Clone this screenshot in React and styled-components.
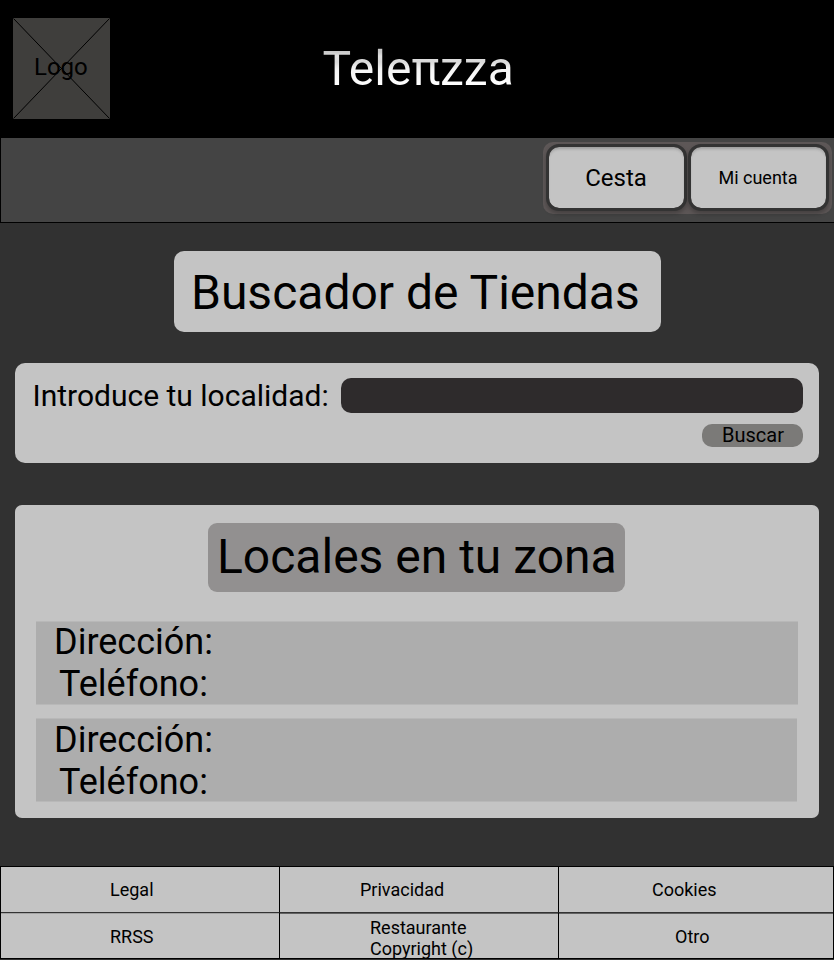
import React from "react";
import styled, { createGlobalStyle } from "styled-components";

const GlobalStyle = createGlobalStyle`
  *, *::before, *::after { box-sizing: border-box; }
  html { background: #313131; }
  body { margin: 0; font-family: Roboto, sans-serif; color: #000; }
  h1, h2, p { margin: 0; font-weight: 400; }
  button, input { font: inherit; color: inherit; border: 0; padding: 0; margin: 0; }
`;

const Page = styled.div`
  width: 834px;
  height: 960px;
  display: flex;
  flex-direction: column;
  background: #313131;
  overflow: hidden;
`;

const Header = styled.header`
  flex: none;
  height: 138px;
  display: grid;
  grid-template-columns: 322px auto;
  background: #000;
  padding-top: 18px;
`;

const LogoBox = styled.div`
  display: grid;
  width: 97px;
  height: 101px;
  margin-left: 13px;
  background: #3f3e3c;
  > * { grid-area: 1 / 1; }
`;

const LogoText = styled.span`
  padding: 35px 0 0 21px;
  font-size: 24px;
  line-height: 28px;
`;

const Brand = styled.h1`
  justify-self: start;
  height: 56px;
  margin: 23px 0 0 0.5px;
  font-size: 48px;
  line-height: 56px;
  color: transparent;
  background: linear-gradient(#c8c8c8 11px, #e0e0e0 15px, #dadada 21px, #f4f4f4 28px, #fff 44px);
  background-clip: text;
  -webkit-background-clip: text;
`;

const Nav = styled.nav`
  flex: none;
  height: 85px;
  display: flex;
  justify-content: flex-end;
  align-items: flex-start;
  padding: 4px 2px 0 0;
  background: #444;
  border-left: 1px solid #000;
  border-bottom: 1px solid #000;
`;

const NavActions = styled.div`
  width: 289px;
  height: 72px;
  display: flex;
  gap: 1px;
  padding: 2px 3px;
  border-radius: 10px;
  background: #5d5757;
`;

const NavButton = styled.button`
  width: 141px;
  height: 67px;
  border: 3px solid #333;
  border-radius: 13px;
  background: #c4c4c4;
  background-clip: padding-box;
  box-shadow: 0 3px 4px rgba(0, 0, 0, 0.25), inset 0 3px 3px -1px rgba(0, 0, 0, 0.2);
  font-size: ${(p) => p.$size}px;
  line-height: 30px;
  padding: 1px 1px 0 0;
`;

const Main = styled.main`
  flex: none;
  height: 643px;
  padding: 28px 15px 0;
  display: flex;
  flex-direction: column;
`;

const PageTitle = styled.h2`
  align-self: flex-start;
  width: 487px;
  height: 81px;
  margin-left: 159px;
  padding: 14px 0 0 17px;
  border-radius: 10px;
  background: #c4c4c4;
  font-size: 48px;
  line-height: 56px;
  white-space: nowrap;
`;

const SearchPanel = styled.form`
  height: 100px;
  margin-top: 31px;
  padding: 15px 16px 0 17.5px;
  border-radius: 10px;
  background: #c4c4c4;
  display: flex;
  flex-direction: column;
  align-items: flex-end;
  gap: 11px;
`;

const SearchRow = styled.div`
  width: 100%;
  display: flex;
  justify-content: space-between;
`;

const SearchLabel = styled.label`
  font-size: 30px;
  line-height: 35px;
  white-space: nowrap;
`;

const SearchInput = styled.input`
  width: 462px;
  height: 35px;
  border-radius: 10px;
  background: #2e2b2c;
`;

const SearchButton = styled.button`
  width: 101px;
  height: 23px;
  padding-left: 1px;
  border-radius: 10px;
  background: #7b7a78;
  font-size: 20px;
  line-height: 23px;
`;

const Results = styled.section`
  height: 313px;
  margin-top: 42px;
  padding: 18px 21px 0;
  border-radius: 7px;
  background: #c4c4c4;
`;

const ResultsTitle = styled.h2`
  width: 417px;
  height: 69px;
  margin-left: 172px;
  padding: 6px 0 0 9px;
  border-radius: 9px;
  background: #929090;
  font-size: 48px;
  line-height: 56px;
  white-space: nowrap;
`;

const StoreList = styled.div`
  margin-top: 29px;
  display: flex;
  flex-direction: column;
  gap: 13px;
`;

const Store = styled.article`
  width: ${(p) => p.$width}px;
  height: 84px;
  padding-top: ${(p) => p.$top}px;
  background: #adadad;
  box-shadow: inset 0 1px 0 #b8b8b8, inset 0 -1px 0 #b8b8b8;
  font-size: 36px;
  line-height: 42px;
`;

const StoreLine = styled.p`
  padding-left: ${(p) => p.$indent}px;
`;

const Footer = styled.footer`
  flex: none;
  height: 93px;
  display: grid;
  grid-template-columns: 279px 279px 1fr;
  grid-template-rows: 45px 46px;
  border: 1px solid #000;
  background: #c4c4c4;
  font-size: 18px;
  line-height: 21px;
`;

const FooterCell = styled.div`
  white-space: nowrap;
  padding: ${(p) => p.$top}px 0 0 ${(p) => p.$left}px;
  border-right: ${(p) => (p.$last ? "0" : "1px solid #000")};
  border-top: ${(p) => (p.$second ? "1px solid #333" : "0")};
  box-shadow: ${(p) => (p.$second ? (p.$first ? "inset 0 1px 0 #a4a4a4" : "inset 0 1px 0 #626262") : "none")};
`;

const stores = [
  { width: 762, top: 0 },
  { width: 761, top: 1 },
];

export default function App() {
  return (
    <>
      <GlobalStyle />
      <Page>
        <Header>
          <LogoBox>
            <svg width="97" height="101" fill="none" stroke="#000">
              <path d="M.5 .5 96.5 100.5M96.5 .5 .5 100.5" />
            </svg>
            <LogoText>Logo</LogoText>
          </LogoBox>
          <Brand>Teleπzza</Brand>
        </Header>
        <Nav>
          <NavActions>
            <NavButton $size={24}>Cesta</NavButton>
            <NavButton $size={18}>Mi cuenta</NavButton>
          </NavActions>
        </Nav>
        <Main>
          <PageTitle>Buscador de Tiendas</PageTitle>
          <SearchPanel>
            <SearchRow>
              <SearchLabel htmlFor="city">Introduce tu localidad:</SearchLabel>
              <SearchInput id="city" />
            </SearchRow>
            <SearchButton type="button">Buscar</SearchButton>
          </SearchPanel>
          <Results>
            <ResultsTitle>Locales en tu zona</ResultsTitle>
            <StoreList>
              {stores.map(({ width, top }) => (
                <Store key={width} $width={width} $top={top}>
                  <StoreLine $indent={18}>Dirección:</StoreLine>
                  <StoreLine $indent={23}>Teléfono:</StoreLine>
                </Store>
              ))}
            </StoreList>
          </Results>
        </Main>
        <Footer>
          <FooterCell $top={12} $left={109}>Legal</FooterCell>
          <FooterCell $top={12} $left={80}>Privacidad</FooterCell>
          <FooterCell $top={12} $left={93} $last>Cookies</FooterCell>
          <FooterCell $top={13} $left={109} $second $first>RRSS</FooterCell>
          <FooterCell $top={4} $left={90} $second>Restaurante<br />Copyright (c)</FooterCell>
          <FooterCell $top={13} $left={116} $second $last>Otro</FooterCell>
        </Footer>
      </Page>
    </>
  );
}
